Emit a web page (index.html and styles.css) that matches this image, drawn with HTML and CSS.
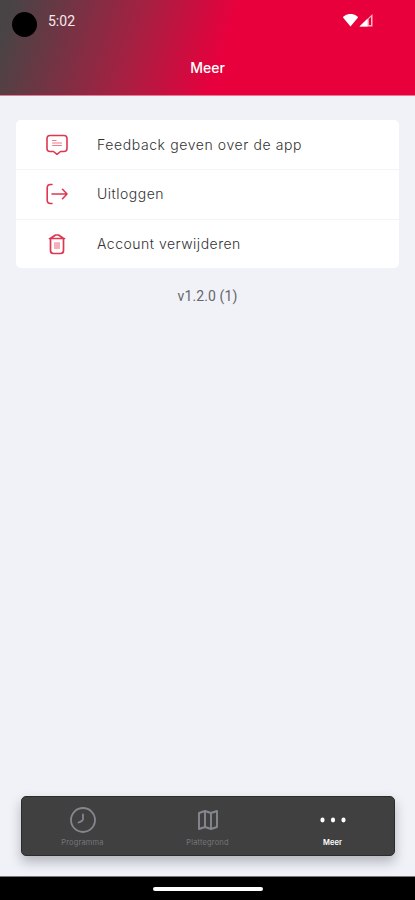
FILE: index.html
```html
<!DOCTYPE html>
<html lang="nl">
<head>
<meta charset="utf-8">
<title>Meer</title>
<link rel="stylesheet" href="styles.css">
</head>
<body>
<div class="screen">
  <header class="header">
    <div class="status">
      <span class="camera"></span>
      <span class="time">5:02</span>
      <svg class="signals" width="32" height="16" viewBox="0 0 32 16">
        <path d="M1 4.500C1 3.500 4 1 8.500 1S16 3.500 16 4.500L8.500 13.500Z" fill="#fff"/>
        <path d="M17.500 13.500L30.500 1V13.500Z" fill="#ffb5c4"/>
        <path d="M17.500 13.500L25.500 5.800V13.500Z" fill="#fff"/>
        <path d="M26.800 6L29 4V12H26.800Z" fill="#e8003d"/>
      </svg>
    </div>
    <h1 class="title">Meer</h1>
  </header>
  <main class="content">
    <ul class="menu">
      <li class="row">
        <svg class="icon" width="24" height="24" viewBox="0 0 24 24">
          <path d="M5 2.500H19Q22 2.500 22 5.500V15.500Q22 18.500 19 18.500H15.500L12 21.300L8.500 18.500H5Q2 18.500 2 15.500V5.500Q2 2.500 5 2.500Z"/>
          <path class="fine" d="M7.500 7.500H11M7.500 10H16.500M7.500 12.500H16.500"/>
        </svg>
        <span class="label feedback">Feedback geven over de app</span>
      </li>
      <li class="row">
        <svg class="icon" width="24" height="24" viewBox="0 0 24 24">
          <path d="M7 2.500H5.500Q2.200 2.500 2.200 6V18Q2.200 21.500 5.500 21.500H7M7 12H22M17.500 7.300L22 12L17.500 16.700"/>
        </svg>
        <span class="label">Uitloggen</span>
      </li>
      <li class="row">
        <svg class="icon" width="24" height="24" viewBox="0 0 24 24">
          <path class="bin" d="M4.500 6.500H19.500M6 6L10.500 3H13.500L18 6M5.500 6.500V18.500Q5.500 21.500 8.500 21.500H15.500Q18.500 21.500 18.500 18.500V6.500"/>
          <path class="fine" d="M10 10.500V16.500M12 10.500V16.500M14 10.500V16.500"/>
        </svg>
        <span class="label">Account verwijderen</span>
      </li>
    </ul>
    <p class="version">v1.2.0 (1)</p>
  </main>
  <nav class="tabs">
    <div class="tab">
      <svg width="28" height="28" viewBox="0 0 28 28" fill="none" stroke="#84878d" stroke-width="1.800" stroke-linecap="round">
        <circle cx="14" cy="14" r="12"/><path d="M14 8.500V13Q14 15 9.500 16.500"/>
      </svg>
      <span class="tab-name">Programma</span>
    </div>
    <div class="tab">
      <svg width="28" height="28" viewBox="0 0 28 28" fill="none" stroke="#84878d" stroke-width="1.900" stroke-linejoin="round">
        <path d="M5 7L11 5L17 7L23 5V21L17 23L11 21L5 23ZM11 5V21M17 7V23"/>
      </svg>
      <span class="tab-name">Plattegrond</span>
    </div>
    <div class="tab active">
      <svg width="28" height="28" viewBox="0 0 28 28" fill="#fff">
        <ellipse cx="3.500" cy="14" rx="2.100" ry="2.400"/><ellipse cx="14" cy="14" rx="2.100" ry="2.400"/><ellipse cx="24.500" cy="14" rx="2.100" ry="2.400"/>
      </svg>
      <span class="tab-name">Meer</span>
    </div>
  </nav>
  <footer class="gesture"><span class="pill"></span></footer>
</div>
</body>
</html>
```
FILE: styles.css
```css
* { box-sizing: border-box; }
body { margin: 0; }
.screen {
  width: 415px;
  height: 900px;
  display: flex;
  flex-direction: column;
  overflow: hidden;
  background: #f0f2f8;
  font-family: Inter, "Liberation Sans", sans-serif;
}
.header {
  height: 96px;
  flex: none;
  background: linear-gradient(108deg, #484445 3%, #a81f42 34%, #e8003d 54%);
  border-bottom: 1px solid #e77b95;
  color: #fff;
}
.status {
  display: flex;
  align-items: center;
  height: 42px;
  padding: 6px 41px 0 12px;
}
.camera { width: 25px; height: 25px; border-radius: 50%; background: #000; }
.time { margin: -6px 0 0 11px; font: 400 14px Roboto, sans-serif; color: #f6e9ed; }
.signals { margin: -7px 0 0 auto; }
.title {
  margin: 16px 0 0;
  text-align: center;
  font-size: 14px;
  line-height: 20px;
  font-weight: 500;
}
.content { flex: 1; padding: 24px 16px 0; }
.menu {
  margin: 0;
  padding: 0;
  list-style: none;
  border-radius: 5px;
  background: #fff;
}
.row { display: flex; align-items: center; height: 49px; padding-left: 29px; }
.row + .row { height: 50px; border-top: 1px solid #f4f4f6; }
.row:nth-child(2) { padding-bottom: 1px; }
.row:last-child { height: 49px; padding-bottom: 1px; }
.icon {
  margin-right: 28px;
  fill: none;
  stroke: #df3651;
  stroke-width: 1.6;
  stroke-linecap: round;
  stroke-linejoin: round;
}
.icon .fine { stroke: #ee7b8e; stroke-width: 1.2; }
.icon .bin { stroke-width: 1.7; }
.label { font-size: 14px; line-height: 20px; font-weight: 300; color: #333; white-space: nowrap; letter-spacing: 0.5px; }
.feedback { letter-spacing: 0.6px; }
.version { margin: 18px 0 0; text-align: center; font: 400 14px/20px Roboto, sans-serif; letter-spacing: 0.1px; color: #66666b; }
.tabs {
  display: flex;
  flex: none;
  height: 60px;
  margin: 0 20px 20px 21px;
  border-radius: 5px;
  background: #404040;
  border: 1px solid #2b2c2e;
  box-shadow: 0 6px 12px rgba(40, 40, 50, 0.3);
}
.tab { flex: 0 0 125px; display: flex; flex-direction: column; align-items: center; padding-top: 9px; color: #74767b; }
.tab:first-child { margin-left: -2px; }
.tab-name { margin-top: 4px; font-size: 7.5px; line-height: 10px; letter-spacing: 0.15px; }
.active { color: #fff; }
.active .tab-name { font-weight: 600; letter-spacing: 0; }
.gesture { display: flex; justify-content: center; align-items: center; flex: none; height: 24px; background: #000; border-top: 1px solid #777; }
.pill { width: 110px; height: 4px; border-radius: 2px; background: #fff; }
```
